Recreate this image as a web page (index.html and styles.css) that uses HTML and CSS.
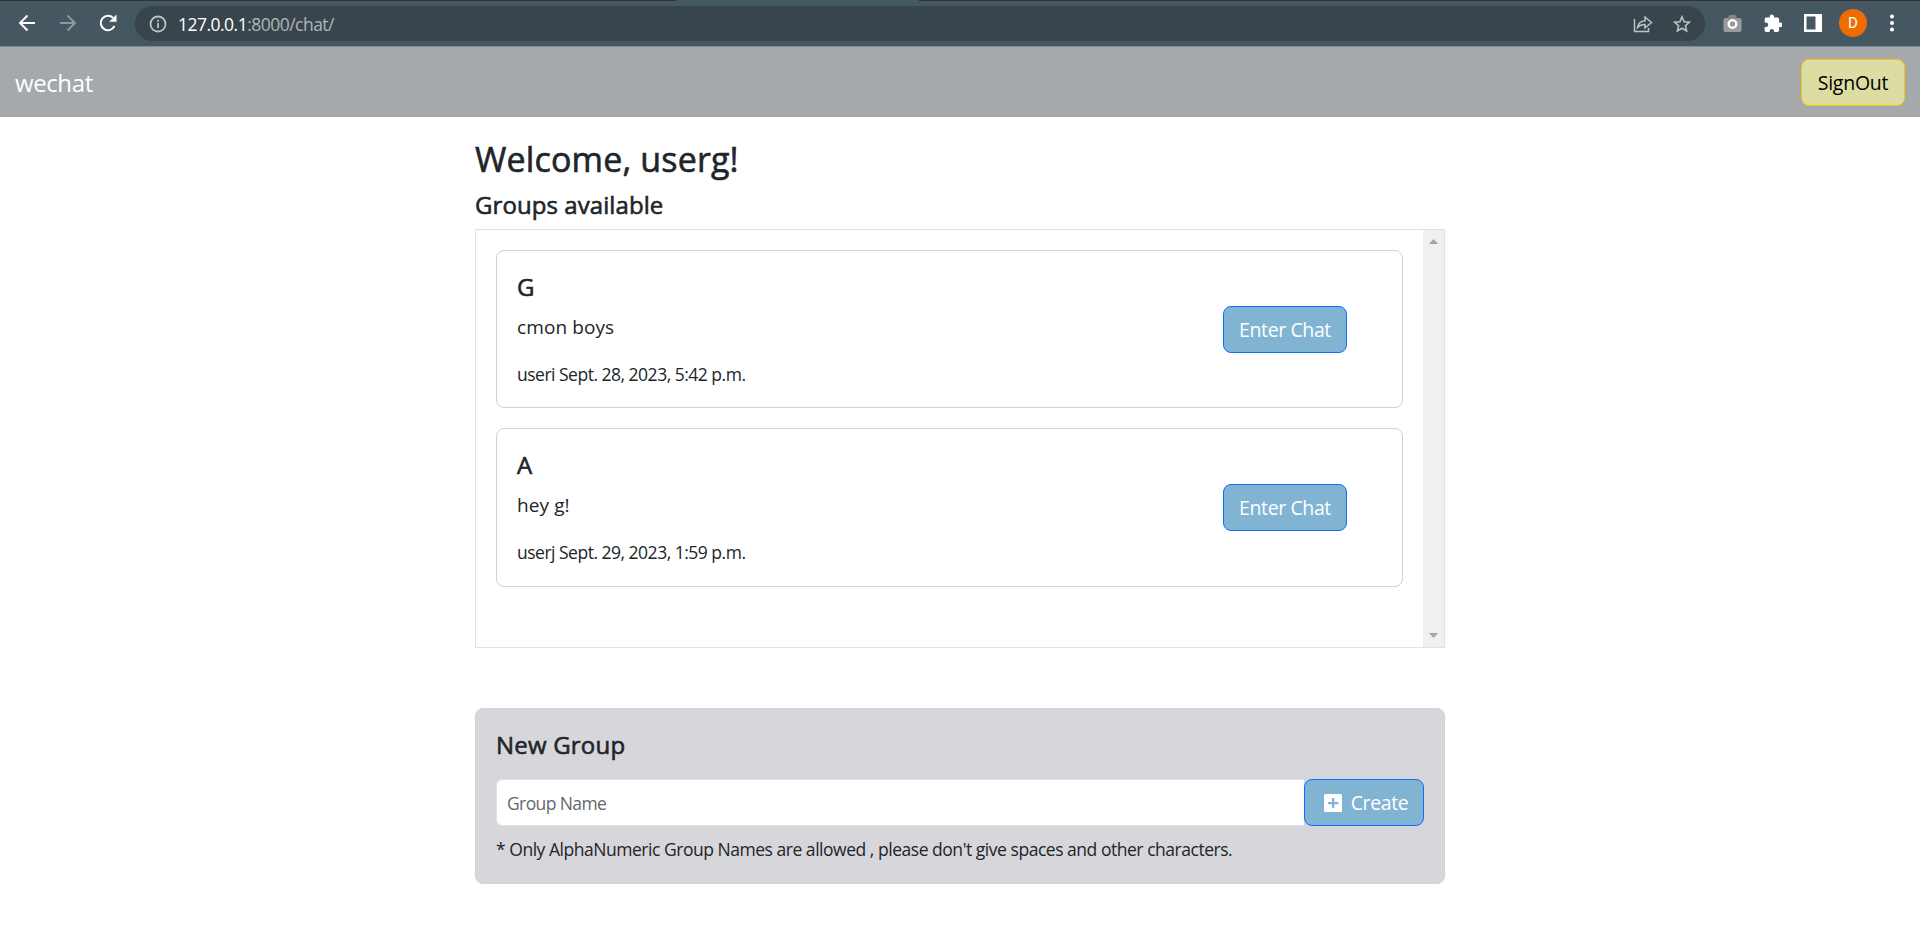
FILE: index.html
```html
<!DOCTYPE html>
<html lang="en">
<head>
<meta charset="utf-8">
<title>wechat</title>
<link rel="stylesheet" href="styles.css">
</head>
<body>
<div class="browser">
  <div class="tab-edge"></div>
  <div class="toolbar">
    <svg class="nav-icon back" viewBox="0 0 18 18"><path d="M17 9H2M9.5 1.5 2 9l7.500 7.500" /></svg>
    <svg class="nav-icon forward" viewBox="0 0 18 18"><path d="M1 9h15M8.500 1.500 16 9l-7.500 7.500" /></svg>
    <svg class="nav-icon reload" viewBox="0 0 18 18"><path d="M15.500 12A7.200 7.200 0 1 1 14 3.800" /><path class="solid" d="M17.500 .5v7.300h-7.300z" /></svg>
    <div class="address">
      <svg class="info" viewBox="0 0 18 18"><circle cx="9" cy="9" r="7.500" /><path d="M9 8v5M9 4.800v1.900" /></svg>
      <span class="url"><span class="host">127.0.0.1</span>:8000/chat/</span>
      <svg class="share" viewBox="0 0 20 18"><path d="M1.500 4v12.500h14V13M4.500 12.500c.6-4.500 3.500-6.500 7.500-6.800V2l6.500 5.500L12 13V9.500c-3.500 0-5.500.8-7.500 3z" /></svg>
      <svg class="star" viewBox="0 0 18 18"><path d="M9 1.800l2.100 4.900 5.300.5-4 3.500 1.200 5.200L9 13.200l-4.600 2.700 1.200-5.200-4-3.500 5.300-.5z" /></svg>
    </div>
    <svg class="camera" viewBox="0 0 19 17"><rect x=".5" y="3" width="18" height="14" rx="2" fill="#9b9b9b" /><rect x="5.500" width="8" height="6" rx="1.500" fill="#858585" /><circle cx="9.500" cy="9" r="3.800" fill="#999" stroke="#fff" stroke-width="2.300" /></svg>
    <svg class="puzzle" viewBox="0 0 18 18"><path d="M16.300 8.500h-1.200V5.200c0-1-.8-1.700-1.700-1.700H10V2.300a2.200 2.200 0 0 0-4.300 0v1.200H2.300C1.400 3.500.7 4.200.7 5.200v3.200h1.200a2.300 2.300 0 0 1 0 4.600H.6v3.300c0 .9.800 1.700 1.700 1.700h3.300v-1.300a2.300 2.300 0 0 1 4.500 0V18h3.300c1 0 1.700-.8 1.700-1.700V13h1.200a2.200 2.200 0 0 0 0-4.500z" /></svg>
    <svg class="panel" viewBox="0 0 18 18"><path fill-rule="evenodd" d="M0 0h18v18H0zM2.500 2.500v13h9v-13z" /></svg>
    <div class="avatar">D</div>
    <svg class="menu" viewBox="0 0 4 18"><circle cx="2" cy="2.500" r="2" /><circle cx="2" cy="9" r="2" /><circle cx="2" cy="15.500" r="2" /></svg>
  </div>
</div>
<nav class="navbar">
  <a class="brand">wechat</a>
  <button class="btn btn-signout"><span>SignOut</span></button>
</nav>
<main class="container">
  <h1 class="welcome">Welcome, userg!</h1>
  <h2 class="heading">Groups available</h2>
  <section class="groups">
    <div class="group-list">
      <article class="card">
        <div class="card-info">
          <h3 class="card-title">G</h3>
          <p class="message">cmon boys</p>
          <p class="meta">useri Sept. 28, 2023, 5:42 p.m.</p>
        </div>
        <button class="btn btn-enter">Enter Chat</button>
      </article>
      <article class="card card-last">
        <div class="card-info">
          <h3 class="card-title">A</h3>
          <p class="message">hey g!</p>
          <p class="meta">userj Sept. 29, 2023, 1:59 p.m.</p>
        </div>
        <button class="btn btn-enter">Enter Chat</button>
      </article>
    </div>
    <div class="scrollbar">
      <svg viewBox="0 0 9 5"><path d="M0 5 4.500 0 9 5z" /></svg>
      <svg viewBox="0 0 9 5"><path d="M0 0h9L4.500 5z" /></svg>
    </div>
  </section>
  <section class="new-group">
    <h2 class="new-title">New Group</h2>
    <div class="form-row">
      <input class="name-input" type="text" placeholder="Group Name">
      <button class="btn btn-create"><svg class="plus" viewBox="0 0 18 18"><path fill-rule="evenodd" d="M1.500 0h15A1.500 1.500 0 0 1 18 1.500v15a1.500 1.500 0 0 1-1.500 1.500h-15A1.500 1.500 0 0 1 0 16.500v-15A1.500 1.500 0 0 1 1.500 0zM8 4v4H4v2.300h4v4h2.300v-4h4V8h-4V4z" /></svg><span>Create</span></button>
    </div>
    <p class="note">* Only AlphaNumeric Group Names are allowed , please don't give spaces and other characters.</p>
  </section>
</main>
</body>
</html>
```
FILE: styles.css
```css
* { box-sizing: border-box; }
body {
  margin: 0;
  height: 948px;
  overflow: hidden;
  background: #fff;
  color: #212529;
  font-family: "Open Sans", "Noto Sans", sans-serif;
}
h1, h2, h3, p { margin: 0; }
svg { display: block; flex: none; }

.browser { height: 47px; background: #455760; border-bottom: 1px solid #788790; }
.tab-edge {
  height: 1px;
  background: linear-gradient(90deg, #2b343b 676px, #455760 676px, #455760 919px, #2b343b 919px);
}
.toolbar { display: flex; align-items: center; height: 44px; padding-left: 18px; }
.nav-icon { width: 18px; height: 18px; fill: none; stroke: #fff; stroke-width: 2; }
.nav-icon .solid { fill: #fff; stroke: none; }
.forward { margin-left: 23px; stroke: #8e999f; }
.reload { margin-left: 22px; }
.address {
  display: flex;
  align-items: center;
  width: 1570px;
  height: 35px;
  margin-left: 18px;
  margin-top: 1px;
  padding: 0 14px;
  border-radius: 18px;
  background: #38454c;
}
.info { width: 18px; height: 18px; fill: none; stroke: #bdc2c5; stroke-width: 1.8; }
.url { flex: 1; margin-left: 11px; color: #afb5b8; font-size: 17.500px; line-height: 24px; letter-spacing: -0.52px; }
.host { color: #fff; }
.share { width: 20px; height: 18px; fill: none; stroke: #bdc2c5; stroke-width: 1.5; }
.star { width: 18px; height: 18px; margin-left: 20px; fill: none; stroke: #bdc2c5; stroke-width: 1.6; }
.camera { width: 19px; height: 17px; margin-left: 18px; }
.puzzle { width: 18px; height: 18px; margin-left: 22px; fill: #fff; }
.panel { width: 18px; height: 18px; margin-left: 22px; fill: #fff; }
.avatar {
  width: 28px;
  height: 28px;
  margin-left: 17px;
  border-radius: 50%;
  background: #ef6c00;
  color: #fff;
  font: 15px/28px Roboto, sans-serif;
  text-align: center;
}
.menu { width: 4px; height: 18px; margin-left: 23px; fill: #fff; }

.navbar {
  display: flex;
  align-items: center;
  justify-content: space-between;
  height: 70px;
  padding: 1px 15px 0;
  background: #a5a9ac;
}
.brand { color: #fff; font-size: 24px; line-height: 36px; letter-spacing: -0.4px; }
.btn {
  display: flex;
  align-items: center;
  justify-content: center;
  height: 47px;
  padding: 1px 0 0;
  border: 1px solid #0d6efd;
  border-radius: 8px;
  background: #80b4d2;
  color: #fff;
  font-family: inherit;
  font-size: 19.500px;
  line-height: 30px;
  letter-spacing: -0.4px;
}
.btn-signout { width: 104px; padding-top: 0; border-color: #ffc107; background: #dcdda2; color: #000; letter-spacing: -0.25px; }

.container { width: 970px; margin: 0 auto; padding-top: 23px; }
.welcome, .heading, .card-title, .new-title {
  font-weight: 400;
  -webkit-text-stroke: 0.6px currentColor;
}
.welcome { height: 50px; font-size: 34px; line-height: 39px; letter-spacing: 0.15px; }
.heading { height: 39px; font-size: 24px; line-height: 29px; letter-spacing: 0.08px; }
.groups { display: flex; height: 419px; border: 1px solid #dee2e6; }
.group-list { flex: 1; padding: 20px; }
.card {
  display: flex;
  align-items: center;
  justify-content: space-between;
  height: 158px;
  margin-bottom: 20px;
  padding: 0 55px 0 20px;
  border: 1px solid #d2d2d4;
  border-radius: 8px;
}
.card-last { height: 159px; }
.card-info { align-self: flex-start; padding-top: 22px; }
.card-title { font-size: 24px; line-height: 28px; }
.message { margin-top: 11px; font-size: 19px; line-height: 30px; letter-spacing: 0.1px; }
.meta { margin-top: 19px; font-size: 17.500px; line-height: 27px; letter-spacing: -0.5px; }
.btn-enter { width: 124px; }
.scrollbar {
  display: flex;
  flex-direction: column;
  align-items: center;
  justify-content: space-between;
  width: 21px;
  padding: 9px 0;
  background: #f0f0f0;
}
.scrollbar svg { width: 9px; height: 5px; fill: #a3a3a3; }

.new-group {
  height: 176px;
  margin-top: 60px;
  padding: 22px 20px 0;
  border: 1px solid #d2d2d4;
  border-radius: 8px;
  background: #d7d6db;
}
.new-title { font-size: 24px; line-height: 28px; letter-spacing: 0.2px; }
.form-row { display: flex; height: 47px; margin-top: 20px; }
.name-input {
  flex: 1;
  min-width: 0;
  height: 47px;
  padding: 1px 10px 0;
  border: 1px solid #dee2e6;
  border-right: 0;
  border-radius: 6px 0 0 6px;
  background: #fff;
  font-family: inherit;
  font-size: 17.500px;
  letter-spacing: -0.6px;
}
.name-input::placeholder { color: #63686d; opacity: 1; }
.btn-create { width: 120px; padding-left: 4px; gap: 9px; }
.plus { width: 18px; height: 18px; fill: #fff; }
.note { margin-top: 10px; font-size: 17.500px; line-height: 27px; letter-spacing: -0.47px; }
```
